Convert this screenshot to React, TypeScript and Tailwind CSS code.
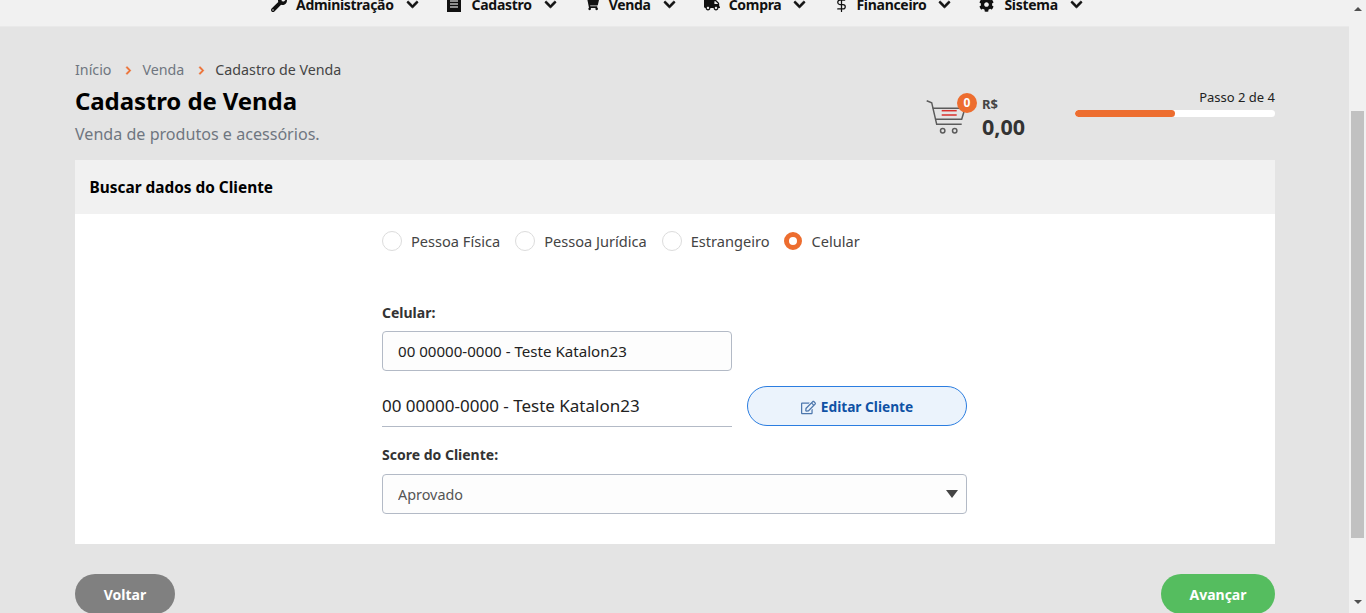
import React from "react";
import {
  FaWrench,
  FaShoppingCart,
  FaTruck,
  FaCog,
  FaChevronDown,
  FaChevronRight,
  FaRegEdit,
} from "react-icons/fa";
import { FiDollarSign } from "react-icons/fi";

function DocIcon({ size }: { size: number }) {
  return (
    <svg width={size} height={size + 2} viewBox="0 0 14 16">
      <path d="M0 0 H10 L14 4 V16 H0 Z" fill="#111" />
      <path d="M3 5 H11 M3 8 H11 M3 11 H11" stroke="#bbb" strokeWidth="1.3" />
    </svg>
  );
}

const menu = [
  { label: "Administração", icon: FaWrench, gap: "w-[25px]", iconSize: 16 },
  { label: "Cadastro", icon: DocIcon, gap: "w-[25px]", iconSize: 14 },
  { label: "Venda", icon: FaShoppingCart, gap: "w-[24px]", iconSize: 14 },
  { label: "Compra", icon: FaTruck, gap: "w-[25px]", iconSize: 16 },
  { label: "Financeiro", icon: FiDollarSign, gap: "w-[22px]", iconSize: 15 },
  { label: "Sistema", icon: FaCog, gap: "w-[25px]", iconSize: 15 },
];

const radios = [
  { label: "Pessoa Física", checked: false, right: "mr-[15px]" },
  { label: "Pessoa Jurídica", checked: false, right: "mr-[15px]" },
  { label: "Estrangeiro", checked: false, right: "mr-[13px]" },
  { label: "Celular", checked: true, right: "" },
];

function TopMenu() {
  return (
    <nav className="h-[27px] bg-[#f1f1f1] overflow-hidden border-b border-[#e9e9e9]">
      <div className="-mt-[7px] h-[22px] flex items-center pl-[271px] gap-[28px] text-[14px] tracking-[-0.3px] font-bold text-[#111]">
        {menu.map((item) => {
          const Icon = item.icon;
          return (
            <div key={item.label} className="flex items-center">
              <span className={`${item.gap} flex items-center`}>
                <Icon size={item.iconSize} />
              </span>
              <span>{item.label}</span>
              <FaChevronDown size={13} className="ml-3" stroke="currentColor" strokeWidth={30} />
            </div>
          );
        })}
      </div>
    </nav>
  );
}

function CartIcon() {
  return (
    <svg width="40" height="34" viewBox="0 0 40 34" fill="none" stroke="#5b5b5b" strokeWidth="1.5" className="block">
      <path d="M0.7 0.7 L5.7 2.7 L10.7 24.3 H35.7" />
      <path d="M6.7 8.3 H39 L35.7 19.3 H9" />
      <circle cx="16.7" cy="30.7" r="2.2" />
      <circle cx="28.7" cy="30.7" r="2.2" />
      <path d="M15.7 10.7 H30.7" stroke="#d9302c" />
      <path d="M15.7 15 H30.7" stroke="#d9302c" />
    </svg>
  );
}

function Scrollbar() {
  return (
    <aside className="w-[17px] shrink-0 bg-[#f1f1f1] flex flex-col items-center">
      <div className="mt-[7px] w-0 h-0 border-x-[4px] border-x-transparent border-b-[4px] border-b-[#505050]" />
      <div className="mt-[100px] w-[13px] h-[427px] bg-[#c1c1c1]" />
      <div className="mt-[62px] w-0 h-0 border-x-[4px] border-x-transparent border-t-[4px] border-t-[#505050]" />
    </aside>
  );
}

export default function App() {
  return (
    <div className="h-[613px] overflow-hidden flex bg-[#e4e4e4] font-['Noto_Sans','Liberation_Sans',sans-serif] text-[#333]">
      <div className="flex-1 min-w-0">
        <TopMenu />
        <main className="w-[1200px] ml-[75px]">
          <div className="flex justify-between pt-[31px]">
            <div>
              <div className="h-[24px] flex items-center text-[14.25px] text-[#6f7680]">
                <span>Início</span>
                <FaChevronRight size={9} className="ml-[13px] mr-[9px] text-[#ed6d2f]" stroke="currentColor" strokeWidth={30} />
                <span>Venda</span>
                <FaChevronRight size={9} className="ml-[13px] mr-[9px] text-[#ed6d2f]" stroke="currentColor" strokeWidth={30} />
                <span className="text-[#444]">Cadastro de Venda</span>
              </div>
              <h1 className="mt-[3px] h-[32px] leading-[32px] text-[24px] tracking-[-0.1px] font-bold text-black">Cadastro de Venda</h1>
              <p className="mt-[5px] h-[24px] leading-[24px] text-[16.1px] text-[#6f7680]">Venda de produtos e acessórios.</p>
            </div>
            <div className="flex pt-[26px]">
              <div className="relative h-[34px] mt-[16px]">
                <CartIcon />
                <span className="absolute -top-[7px] left-[31px] w-[20px] h-[20px] rounded-full bg-[#ed6d2f] text-white text-[12px] font-bold flex items-center justify-center">
                  0
                </span>
              </div>
              <div className="ml-[16px] mt-[11px] w-[93px]">
                <div className="text-[13px] font-bold leading-[18px] text-[#444]">R$</div>
                <div className="text-[21.5px] font-bold leading-[28px] text-[#333]">0,00</div>
              </div>
              <div className="w-[200px]">
                <div className="text-right text-[13px] leading-[18px] mt-[4px] text-[#222]">Passo 2 de 4</div>
                <div className="mt-[4px] h-[7px] rounded-full bg-white overflow-hidden">
                  <div className="h-full w-1/2 rounded-full bg-[#ed6d2f]" />
                </div>
              </div>
            </div>
          </div>

          <section className="mt-[14px]">
            <div className="h-[54px] bg-[#f1f1f1] flex items-center pt-[1px] px-[14.5px] text-[15.4px] font-bold text-black">
              Buscar dados do Cliente
            </div>
            <div className="h-[330px] bg-white pl-[307px] pt-[17px]">
              <div className="flex items-center h-[20px] text-[14.6px] text-[#444]">
                {radios.map((radio) => (
                  <label key={radio.label} className={`flex items-center ${radio.right}`}>
                    {radio.checked ? (
                      <span className="mx-[1px] w-[18px] h-[18px] rounded-full border-[5px] border-[#ed6d2f] bg-white" />
                    ) : (
                      <span className="w-[20px] h-[20px] rounded-full border border-[#dcdcdc] bg-white" />
                    )}
                    <span className="ml-[9px] pt-[2px]">{radio.label}</span>
                  </label>
                ))}
              </div>

              <div className="mt-[52px] h-[20px] leading-[20px] text-[14px] font-bold text-[#333]">Celular:</div>
              <input
                readOnly
                value="00 00000-0000 - Teste Katalon23"
                className="mt-[8px] block w-[350px] h-[40px] px-[15px] text-[15.1px] text-[#222] bg-[#fdfdfd] border border-[#b3bac6] rounded-[4px] outline-none"
              />

              <div className="mt-[15px] flex items-start">
                <div className="w-[350px] h-[41px] border-b border-[#b3bac6] text-[17px] leading-[40px] text-[#222]">
                  00 00000-0000 - Teste Katalon23
                </div>
                <button className="ml-[15px] w-[220px] h-[40px] pt-[2px] rounded-full bg-[#ebf3fc] border border-[#2b7de0] text-[#0f52a5] text-[13.7px] font-bold flex items-center justify-center">
                  <FaRegEdit size={15} className="mr-[5px] text-[#4d77ad]" />
                  Editar Cliente
                </button>
              </div>

              <div className="mt-[18px] h-[20px] leading-[20px] text-[14px] font-bold text-[#333]">Score do Cliente:</div>
              <div className="relative mt-[9px] w-[585px]">
                <select className="block w-full h-[40px] px-[15px] pt-[2px] text-[14.4px] text-[#555] bg-[#fdfdfd] border border-[#b3bac6] rounded-[4px] appearance-none outline-none">
                  <option>Aprovado</option>
                </select>
                <span className="absolute right-[9px] top-[16px] w-0 h-0 border-x-[6px] border-x-transparent border-t-[8px] border-t-[#444]" />
              </div>
            </div>
          </section>

          <div className="mt-[30px] flex justify-between">
            <button className="w-[100px] h-[40px] rounded-full bg-[#808080] text-white text-[14px] font-bold">Voltar</button>
            <button className="w-[114px] h-[40px] rounded-full bg-[#55bd5f] text-white text-[14px] font-bold">Avançar</button>
          </div>
        </main>
      </div>
      <Scrollbar />
    </div>
  );
}
